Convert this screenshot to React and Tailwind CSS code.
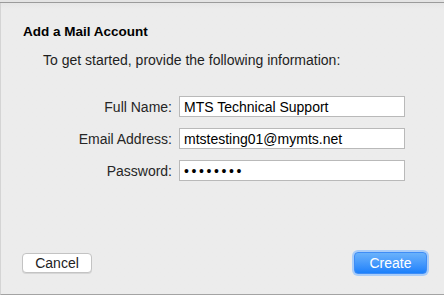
export default function App() {
  const rows = [
    { label: "Full Name:", value: "MTS Technical Support" },
    { label: "Email Address:", value: "mtstesting01@mymts.net" },
    { label: "Password:", value: "••••••••", secret: true },
  ];

  return (
    <div className="w-[444px] h-[295px] flex flex-col bg-[#ececec] font-['Liberation_Sans',Arial,sans-serif] text-[14px] text-[#222] overflow-hidden">
      <div className="h-[2px] bg-[#e4e4e4]" />
      <div className="h-px bg-[#9b9b9b]" />
      <div className="flex-1 flex flex-col border-l border-[#d4d4d4] border-b border-b-[#a3a3a3] bg-gradient-to-b from-[#e6e6e6] to-[#ececec] to-[6px]">
        <div className="pt-[21px] pl-[22px] font-bold text-[13.5px] text-black leading-4">Add a Mail Account</div>
        <div className="pt-3 pl-[42px] leading-4 text-[#1e1e1e]">
          To get started, provide the following information:
        </div>

        <div className="mt-7 flex flex-col gap-[11px]">
          {rows.map((r) => (
            <div key={r.label} className="flex items-center">
              <div className="w-[171px] text-right text-[#262626] leading-4">{r.label}</div>
              <div
                className={`ml-[7px] w-[226px] h-[21px] bg-white border border-[#b9b9b9] flex items-center pl-[4px] text-black leading-4 ${
                  r.secret ? "tracking-[2.6px]" : ""
                }`}
              >
                {r.value}
              </div>
            </div>
          ))}
        </div>

        <div className="mt-auto pb-[18px] flex items-center justify-between pl-[21px] pr-[15px]">
          <button className="w-[70px] h-[20px] bg-white border border-[#c3c3c3] rounded-[4px] text-[14px] text-[#222] leading-4 shadow-[0_1px_0_#d6d6d6]">
            Cancel
          </button>
          <div className="p-[2px] rounded-[6px] bg-[#a9cdf9]">
            <button className="w-[73px] h-[22px] rounded-[4px] border border-[#3f8df6] bg-gradient-to-b from-[#6ab2fb] to-[#1a80fb] text-white text-[14px] leading-4">
              Create
            </button>
          </div>
        </div>
      </div>
    </div>
  );
}
